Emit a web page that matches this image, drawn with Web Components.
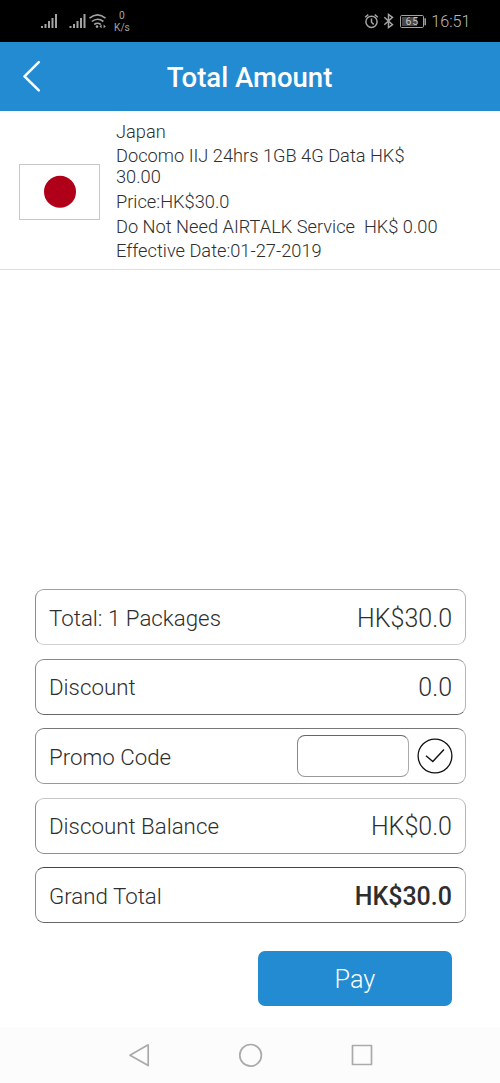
<!DOCTYPE html>
<html lang="en">
<head>
<meta charset="utf-8">
<title>Total Amount</title>
<style>
html,body{margin:0;height:100%}
body{background:#fff;font-family:Roboto,"Liberation Sans",sans-serif;color:#2e2e2e}
</style>
</head>
<body>
<amount-screen></amount-screen>
<script>
const define=(name,html)=>{
  const t=document.createElement('template');
  t.innerHTML=html;
  customElements.define(name,class extends HTMLElement{
    constructor(){super();this.attachShadow({mode:'open'}).append(t.content.cloneNode(true));}
  });
};

define('status-bar',`
<style>
:host{display:flex;height:42px;background:#000;color:#a3a3a3;box-sizing:border-box;padding:0 30px 0 40px;justify-content:space-between}
.side{display:flex;align-items:center}
svg{display:block;flex:none}
.rate{font-size:10.2px;line-height:12.5px;text-align:center;margin:2px 0 0 7px}
.time{font-size:16.2px;line-height:20px;margin:2px -.5px 0 5px;font-weight:300;color:#b8b8b8}
</style>
<div class="side">
<svg width="67" height="42" fill="#a3a3a3" stroke="none">
<g><rect x="1" y="26" width="2" height="2"/><rect x="4.5" y="24" width="2" height="4"/><rect x="8" y="21" width="2" height="7"/><rect x="11.5" y="18" width="2" height="10"/><rect x="15" y="14" width="2" height="14"/></g>
<g transform="translate(28.5 0)"><rect x="1" y="26" width="2" height="2"/><rect x="4.5" y="24" width="2" height="4"/><rect x="8" y="21" width="2" height="7"/><rect x="11.5" y="18" width="2" height="10"/><rect x="15" y="14" width="2" height="14"/></g>
<g fill="none" stroke="#a3a3a3" stroke-width="1.6"><path d="M49.5 18.2Q57.5 11.6 65.5 18.2M51.8 21.5Q57.5 16.9 63.4 21.5M54.2 24.5Q57.5 21.9 60.8 24.5"/></g>
<circle cx="57" cy="26.6" r="1.3"/><path d="M59.4 26.4l2.2-1.8v3.6zM65.8 26.4l-2.2-1.8v3.6z"/>
</svg>
<div class="rate">0<br>K/s</div>
</div>
<div class="side">
<svg width="63" height="42" fill="none" stroke="#a3a3a3" stroke-width="1.5">
<g transform="translate(.8 0)"><circle cx="7.7" cy="21.8" r="5.6"/><path d="M7.7 18.4v3.8l2.2 2.2M1.4 17.2l3.1-2.6M14 17.2l-3.1-2.6"/>
<path d="M20.5 17.2l8.2 7.4-4 3V14.4l4 3-8.2 7.4"/></g>
<rect x="37.5" y="15.5" width="23" height="12" rx="1.2" stroke-width="1"/><rect x="39" y="17" width="15" height="9" fill="#484848" stroke="none"/><path d="M62.2 18.2v7" stroke-width="1.5"/>
<text x="49.3" y="25.2" font-size="10.5" fill="#c4c4c4" stroke="none" text-anchor="middle" font-family="Roboto,sans-serif" letter-spacing=".8">65</text>
</svg>
<span class="time">16:51</span>
</div>`);

define('title-bar',`
<style>
:host{display:grid;grid-template-columns:60px 1fr 60px;align-items:center;height:69px;background:#228bd2;color:#fff}
h1{margin:2px 1px 0 0;text-align:center;font-size:27.5px;line-height:34px;font-weight:500;white-space:nowrap}
svg{display:block}
</style>
<svg width="60" height="69" fill="none" stroke="#fff" stroke-width="2.6" stroke-linecap="round" stroke-linejoin="round"><path d="M38.8 20.2L24.5 34.4L38.8 48.4"/></svg>
<h1><slot></slot></h1>`);

define('package-item',`
<style>
:host{display:flex;align-items:center;box-sizing:border-box;height:159px;padding:0 40px 0 19px;border-bottom:1px solid #dedede}
svg{display:block;flex:none;margin:4px 16px 0 0}
.lines{display:flex;flex-direction:column;gap:3.15px;margin-top:2px;font-size:18.24px;line-height:21.4px;font-weight:300;width:325px}
</style>
<svg width="81" height="56"><rect x=".5" y=".5" width="80" height="55" fill="#fff" stroke="#c8c8c8"/><circle cx="41" cy="27.7" r="16" fill="#b00019"/></svg>
<div class="lines"><slot></slot></div>`);

define('sum-row',`
<style>
:host{display:flex;align-items:center;justify-content:space-between;box-sizing:border-box;height:56px;border:1px solid;border-color:var(--top,#858585) #b5b5b5 var(--bottom,#858585) #8c8c8c;border-radius:9px;padding:0 13px 0 13px}
.label{font-size:22.3px;line-height:28px;font-weight:300;margin-top:1px;white-space:nowrap}
.value{display:flex;align-items:center;font-size:25px;line-height:30px;font-weight:300;margin-top:3px;white-space:nowrap}
:host([strong]) .value{font-weight:500}
</style>
<span class="label"><slot name="label"></slot></span>
<span class="value"><slot></slot></span>`);

define('promo-entry',`
<style>
:host{display:flex;align-items:center;gap:8px;margin:-3px -1px 0 0}
input{box-sizing:border-box;width:112px;height:42px;border:1px solid;border-color:#666 #aaa #999 #888;border-radius:8px;background:#fff;margin:0;outline:0}
svg{display:block}
</style>
<input aria-label="Promo Code">
<svg width="36" height="36" fill="none" stroke="#111"><circle cx="18" cy="18" r="16.9" stroke-width="1.3"/><path d="M9 17.8L15.8 23.6L27 11.5" stroke-width="1.4"/></svg>`);

define('pay-button',`
<style>
:host{display:block;width:194.5px;height:55px}
button{display:block;width:100%;height:100%;border:0;border-radius:7px;background:#228bd2;color:#fff;font:300 25.2px/30px Roboto,"Liberation Sans",sans-serif;padding:3px 0 0}
</style>
<button><slot></slot></button>`);

define('nav-bar',`
<style>
:host{display:flex;height:56px;background:#fcfcfc;justify-content:center}
svg{display:block}
</style>
<svg width="500" height="56" fill="none" stroke="#aaa" stroke-width="1.7" stroke-linejoin="round"><path d="M130 28.2L148.2 17.8V38.6Z"/><circle cx="250.6" cy="28.3" r="10.8"/><rect x="352.5" y="18.5" width="19" height="19"/></svg>`);

define('amount-screen',`
<style>
:host{display:flex;flex-direction:column;width:500px;height:1083px;background:#fff;overflow:hidden}
.sums{display:flex;flex-direction:column;gap:13.5px;margin:auto 34px 0 35px}
pay-button{align-self:flex-end;margin:28px 47.8px 21px 0}
.sums,pay-button,nav-bar{flex:none}
</style>
<status-bar></status-bar>
<title-bar>Total Amount</title-bar>
<package-item>
<div>Japan</div><div>Docomo IIJ 24hrs 1GB 4G Data HK$<br>30.00</div><div>Price:HK$30.0</div><div style="white-space:pre">Do Not Need AIRTALK Service  HK$ 0.00</div><div>Effective Date:01-27-2019</div>
</package-item>
<div class="sums">
<sum-row style="--top:#a0a0a0;--bottom:#cfcfcf"><span slot="label">Total: 1 Packages</span>HK$30.0</sum-row>
<sum-row style="--top:#888;--bottom:#666"><span slot="label">Discount</span>0.0</sum-row>
<sum-row style="--top:#777;--bottom:#999"><span slot="label">Promo Code</span><promo-entry></promo-entry></sum-row>
<sum-row style="--top:#c6c6c6;--bottom:#8f8f8f"><span slot="label">Discount Balance</span>HK$0.0</sum-row>
<sum-row strong style="--top:#444;--bottom:#666"><span slot="label">Grand Total</span>HK$30.0</sum-row>
</div>
<pay-button>Pay</pay-button>
<nav-bar></nav-bar>`);
</script>
</body>
</html>
